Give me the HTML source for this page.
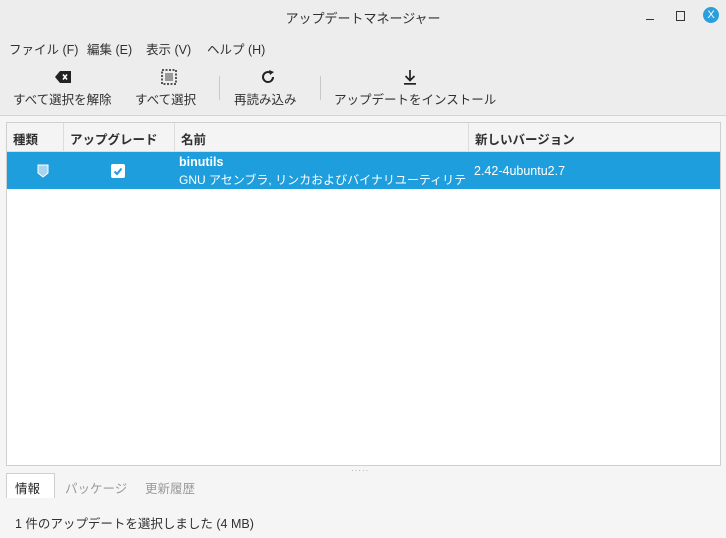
<!DOCTYPE html><html><head><style>
body{margin:0;width:726px;height:538px;background:#f5f5f5;font-family:"Liberation Sans","Noto Sans CJK JP",sans-serif;font-size:12.5px;color:#303030;position:relative;overflow:hidden}
.a{position:absolute;white-space:nowrap}
#top{position:absolute;left:0;top:0;width:726px;height:115px;background:#ededee;border-bottom:1px solid #d4d4d4}
</style></head><body>
<div id="top"></div>
<div class="a" style="left:0;width:726px;top:8px;text-align:center;font-size:13px">アップデートマネージャー</div>
<div class="a" style="left:646px;top:19px;width:8px;height:1px;background:#333"></div>
<div class="a" style="left:676px;top:11px;width:7px;height:8px;border:1.5px solid #333"></div>
<div class="a" style="left:703px;top:7px;width:16px;height:16px;border-radius:50%;background:#2b9fdd;color:#fff;font-size:11px;text-align:center;line-height:16px">X</div>
<div class="a" style="left:9px;top:39px">ファイル (F)</div>
<div class="a" style="left:87px;top:39px">編集 (E)</div>
<div class="a" style="left:146px;top:39px">表示 (V)</div>
<div class="a" style="left:207px;top:39px">ヘルプ (H)</div>
<svg class="a" style="left:55px;top:70px" width="18" height="14"><path d="M5 1H16V13H5L0 7Z" fill="#222"/><path d="M8 4.5L12 9.5M12 4.5L8 9.5" stroke="#fff" stroke-width="1.6"/></svg>
<svg class="a" style="left:161px;top:69px" width="16" height="16"><rect x="1" y="1" width="14" height="14" fill="none" stroke="#222" stroke-width="1.5" stroke-dasharray="2 1.5"/><rect x="4" y="4" width="8" height="8" fill="#999"/></svg>
<svg class="a" style="left:260px;top:69px" width="16" height="16"><path d="M13 8A5 5 0 1 1 10.5 3.7" fill="none" stroke="#222" stroke-width="2"/><path d="M9 1L14 3L10 6Z" fill="#222"/></svg>
<svg class="a" style="left:402px;top:69px" width="16" height="16"><path d="M8 1V11M3.5 7L8 11.5L12.5 7" fill="none" stroke="#222" stroke-width="1.7"/><rect x="2" y="14" width="12" height="1.7" fill="#222"/></svg>
<div class="a" style="left:13px;top:89px">すべて選択を解除</div>
<div class="a" style="left:135px;top:89px">すべて選択</div>
<div class="a" style="left:219px;top:76px;width:1px;height:24px;background:#c8c8c8"></div>
<div class="a" style="left:234px;top:89px">再読み込み</div>
<div class="a" style="left:320px;top:76px;width:1px;height:24px;background:#c8c8c8"></div>
<div class="a" style="left:334px;top:89px">アップデートをインストール</div>
<div class="a" style="left:6px;top:122px;width:713px;height:342px;background:#fff;border:1px solid #cfcfcf"></div>
<div class="a" style="left:7px;top:123px;width:713px;height:28px;background:#f4f4f4;border-bottom:1px solid #dcdcdc"></div>
<div class="a" style="left:63px;top:123px;width:1px;height:28px;background:#dcdcdc"></div>
<div class="a" style="left:174px;top:123px;width:1px;height:28px;background:#dcdcdc"></div>
<div class="a" style="left:468px;top:123px;width:1px;height:28px;background:#dcdcdc"></div>
<div class="a" style="left:13px;top:129px;font-weight:bold">種類</div>
<div class="a" style="left:70px;top:129px;font-weight:bold">アップグレード</div>
<div class="a" style="left:181px;top:129px;font-weight:bold">名前</div>
<div class="a" style="left:475px;top:129px;font-weight:bold">新しいバージョン</div>
<div class="a" style="left:7px;top:152px;width:713px;height:37px;background:#1f9ede"></div>
<svg class="a" style="left:37px;top:164px" width="12" height="14"><path d="M1 1H11V9L6 13L1 9Z" fill="#a9d4ef" stroke="#fff" stroke-width="1"/></svg>
<div class="a" style="left:111px;top:164px;width:14px;height:14px;background:#fff;border-radius:2px"></div>
<svg class="a" style="left:111px;top:164px" width="14" height="14"><path d="M3.5 7.5L6 10L10.5 4.5" fill="none" stroke="#1f9ede" stroke-width="2"/></svg>
<div class="a" style="left:179px;top:155px;color:#fff;font-weight:bold">binutils</div>
<div class="a" style="left:179px;top:171px;color:#fff;width:288px;overflow:hidden;font-size:12px">GNU アセンブラ, リンカおよびバイナリユーティリティ</div>
<div class="a" style="left:474px;top:164px;color:#fff">2.42-4ubuntu2.7</div>
<div class="a" style="left:351px;top:466px;color:#999;font-size:8px;letter-spacing:1px">·····</div>
<div class="a" style="left:6px;top:473px;width:47px;height:24px;background:#fff;border:1px solid #cfcfcf;border-bottom:none"></div>
<div class="a" style="left:15px;top:478px;color:#222">情報</div>
<div class="a" style="left:65px;top:478px;color:#9a9a9a">パッケージ</div>
<div class="a" style="left:145px;top:478px;color:#9a9a9a">更新履歴</div>
<div class="a" style="left:15px;top:513px">1 件のアップデートを選択しました (4 MB)</div>
</body></html>
